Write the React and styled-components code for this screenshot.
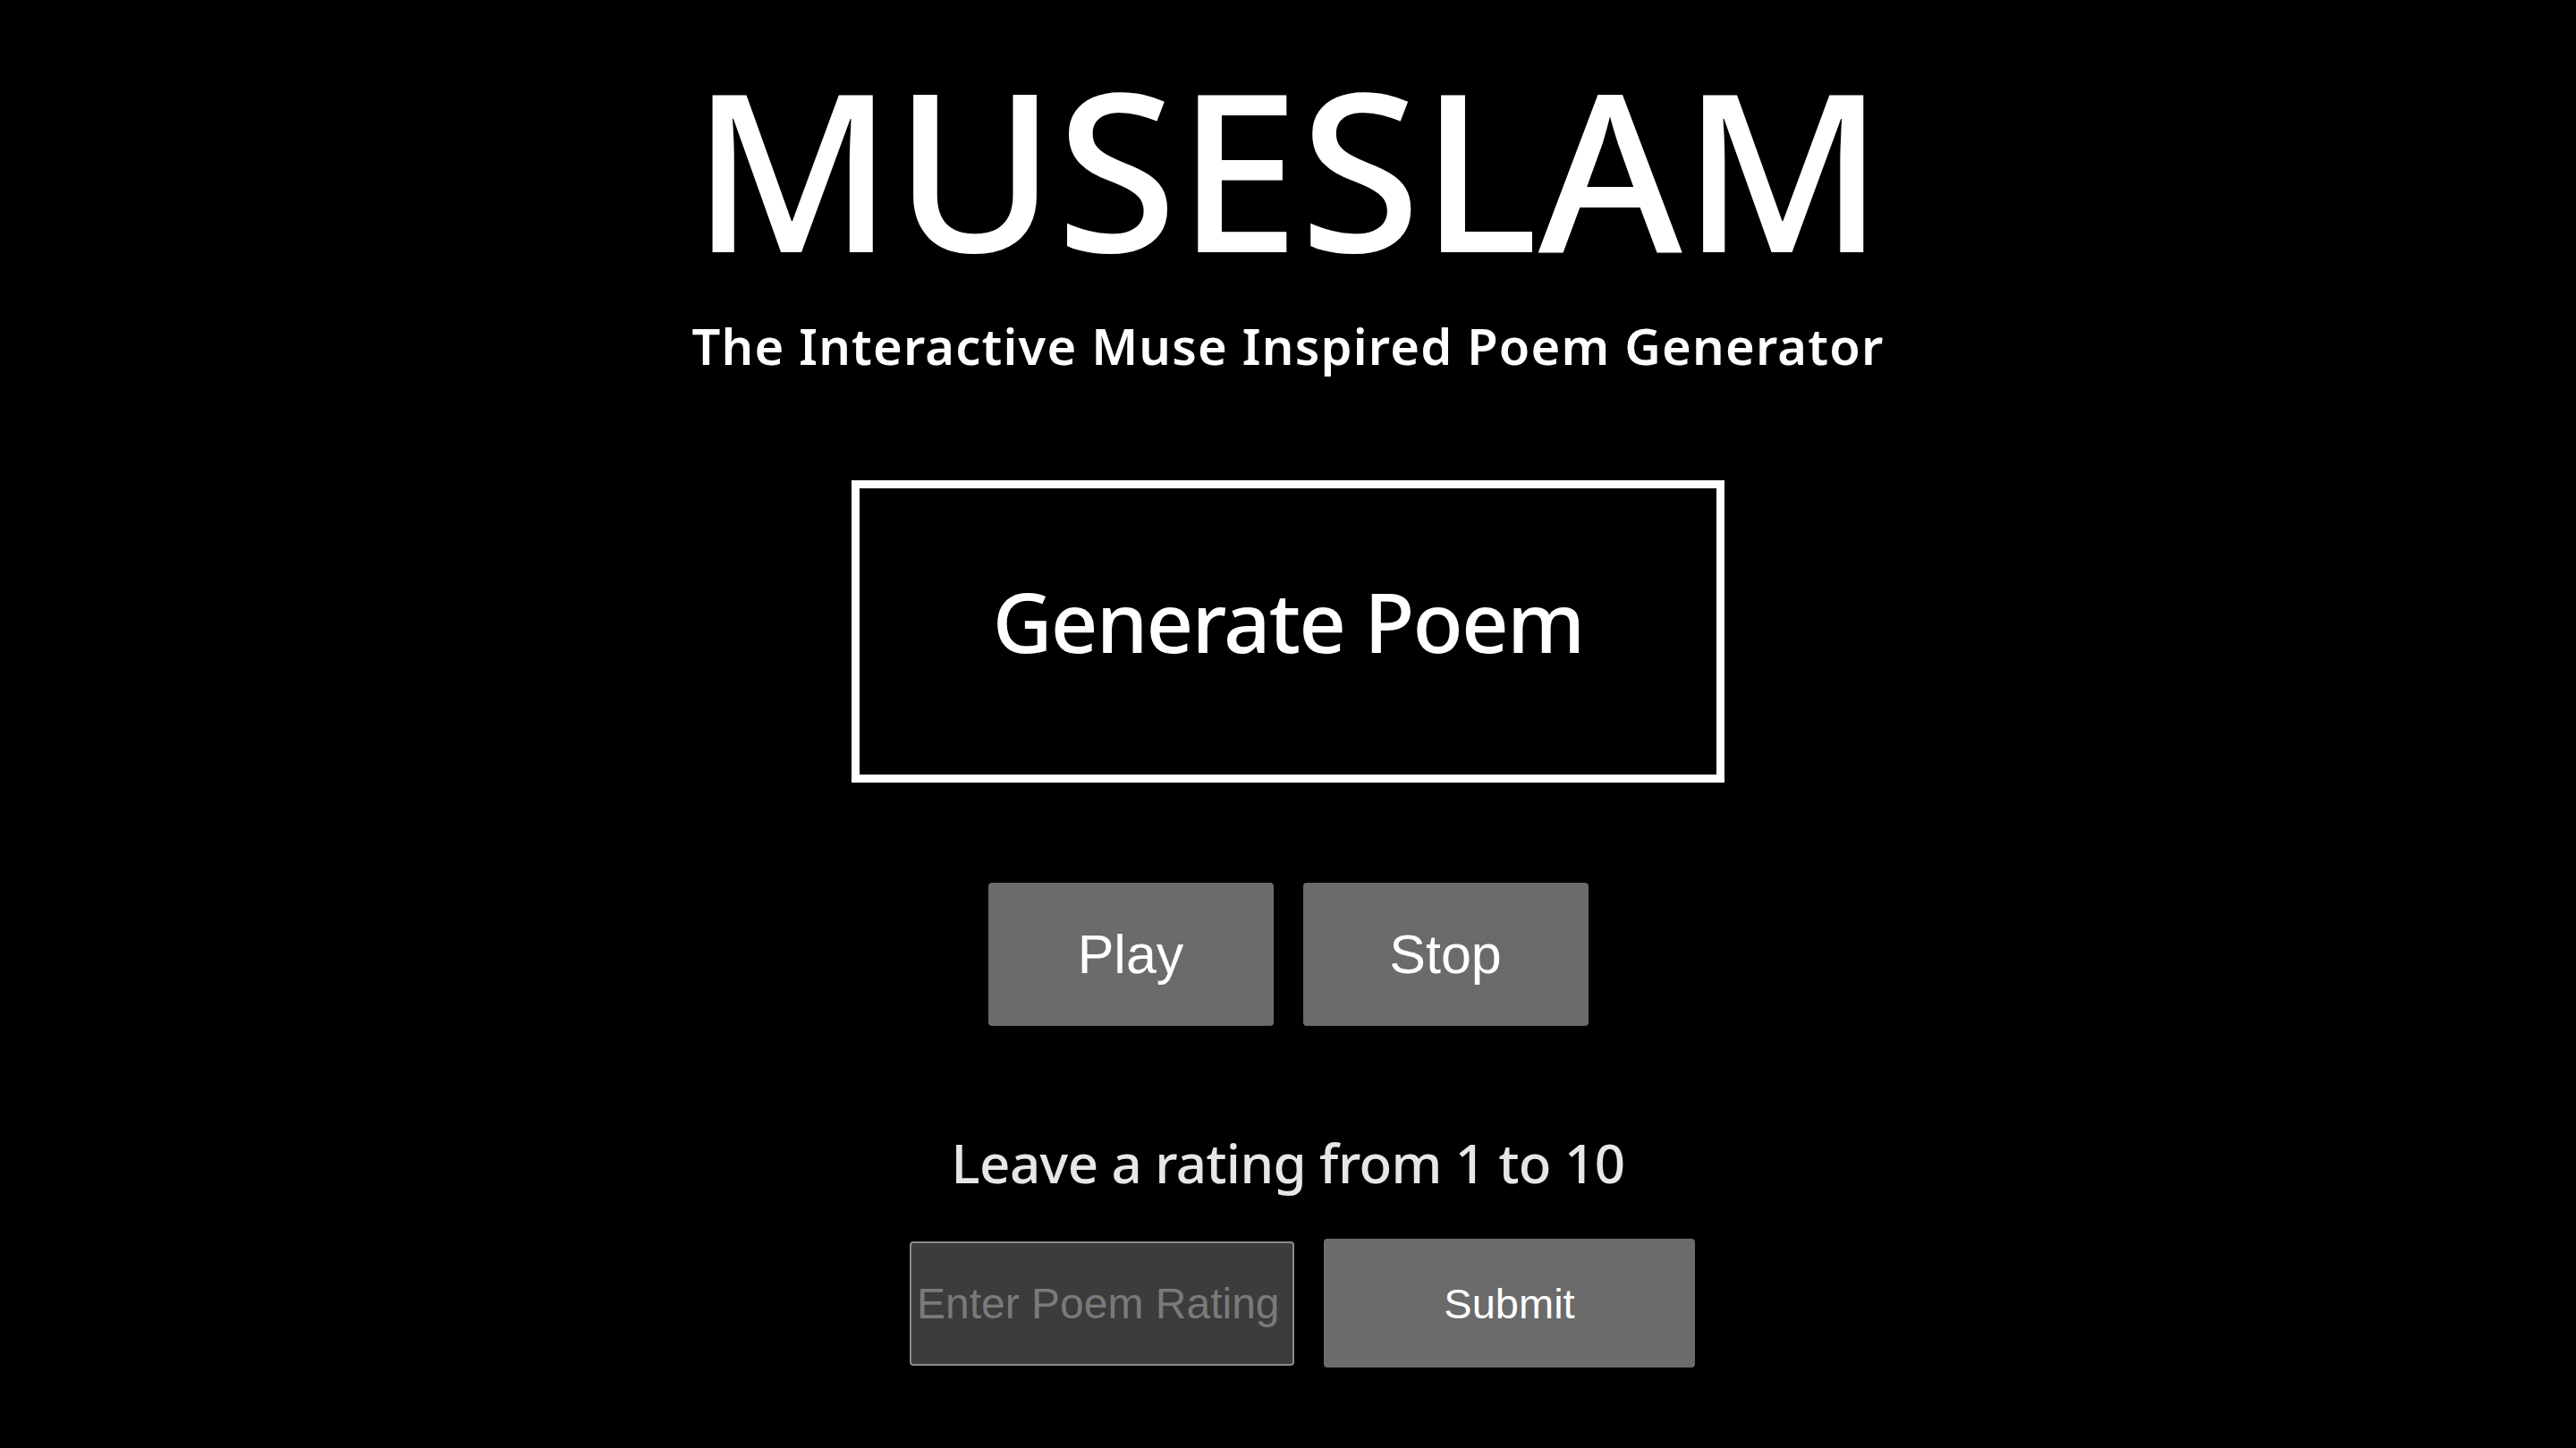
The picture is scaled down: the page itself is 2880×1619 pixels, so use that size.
import React from "react";
import styled, { createGlobalStyle } from "styled-components";

const GlobalStyle = createGlobalStyle`
  html, body {
    margin: 0;
    padding: 0;
    background: #000000;
  }
  body {
    font-family: "Noto Sans", "Open Sans", sans-serif;
  }
`;

const App = () => {
  return (
    <>
      <GlobalStyle />
      <Page>
        <Header>
          <Title>MUSESLAM</Title>
          <Subtitle>The Interactive Muse Inspired Poem Generator</Subtitle>
        </Header>
        <GenerateButton type="button">Generate Poem</GenerateButton>
        <PlayerRow>
          <GrayButton type="button">Play</GrayButton>
          <GrayButton type="button">Stop</GrayButton>
        </PlayerRow>
        <RatingLabel>Leave a rating from 1 to 10</RatingLabel>
        <RatingForm onSubmit={(e) => e.preventDefault()}>
          <RatingInput type="text" placeholder="Enter Poem Rating" />
          <GrayButton type="submit" $width="415px" $height="144px" $size="47px">
            Submit
          </GrayButton>
        </RatingForm>
      </Page>
    </>
  );
};

export default App;

const Page = styled.main`
  min-height: 1619px;
  background: #000000;
  color: #ffffff;
  display: flex;
  flex-direction: column;
  align-items: center;
  padding-top: 64px;
  box-sizing: border-box;
`;

const Header = styled.header`
  display: flex;
  flex-direction: column;
  align-items: center;
`;

const Title = styled.h1`
  margin: 0;
  font-size: 246px;
  line-height: 1;
  font-weight: 500;
  letter-spacing: 0;
`;

const Subtitle = styled.p`
  margin: 48px 0 0;
  font-size: 56px;
  line-height: 1;
  font-weight: 600;
  letter-spacing: 1.2px;
`;

const GenerateButton = styled.button`
  margin-top: 123px;
  width: 976px;
  height: 338px;
  box-sizing: border-box;
  background: #000000;
  border: 9px solid #ffffff;
  color: #ffffff;
  font-family: "Noto Sans", "Open Sans", sans-serif;
  font-size: 92px;
  font-weight: 500;
  letter-spacing: -1.8px;
  padding: 0 0 24px;
  display: flex;
  align-items: center;
  justify-content: center;
  cursor: pointer;
`;

const PlayerRow = styled.div`
  margin-top: 112px;
  display: flex;
  gap: 33px;
`;

const GrayButton = styled.button`
  width: ${({ $width }) => $width || "319px"};
  height: ${({ $height }) => $height || "160px"};
  box-sizing: border-box;
  background: #6b6b6b;
  border: none;
  border-radius: 4px;
  color: #ffffff;
  font-family: "Liberation Sans", Arial, sans-serif;
  font-size: ${({ $size }) => $size || "61px"};
  display: flex;
  align-items: center;
  justify-content: center;
  padding: 0;
  cursor: pointer;
`;

const RatingLabel = styled.h2`
  margin: 123px 0 0;
  font-size: 60px;
  line-height: 1;
  font-weight: 500;
  letter-spacing: -0.6px;
  color: #e6e6e6;
`;

const RatingForm = styled.form`
  margin-top: 55px;
  padding-left: 32px;
  display: flex;
  align-items: center;
  gap: 33px;
`;

const RatingInput = styled.input`
  width: 430px;
  height: 139px;
  box-sizing: border-box;
  background: #3c3c3c;
  border: 2px solid #8a8a8a;
  border-radius: 4px;
  color: #ffffff;
  font-family: "Liberation Sans", Arial, sans-serif;
  font-size: 48px;
  padding: 0 6px;
  outline: none;

  &::placeholder {
    color: #7a7a7a;
  }
`;
